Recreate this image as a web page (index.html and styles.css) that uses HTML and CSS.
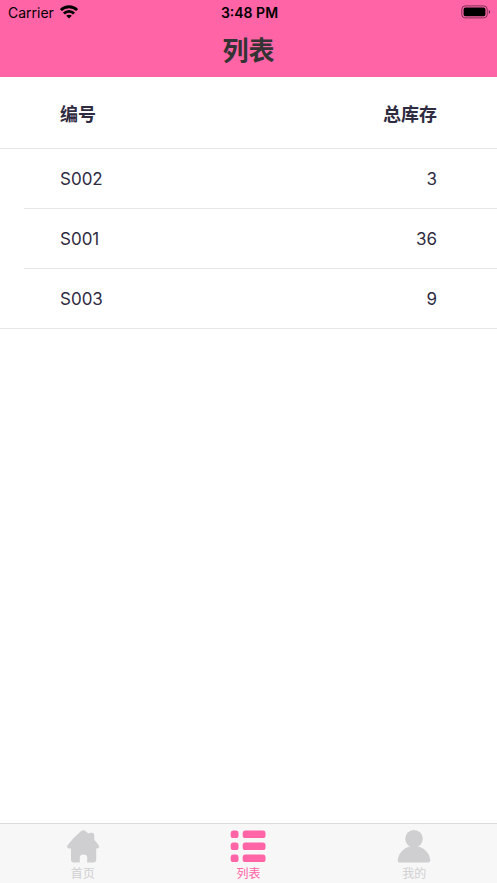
FILE: index.html
```html
<!DOCTYPE html>
<html lang="zh-CN">
<head>
<meta charset="utf-8">
<meta name="viewport" content="width=device-width, initial-scale=1">
<title>列表</title>
<link rel="stylesheet" href="styles.css">
</head>
<body>
<header class="header">
  <div class="status">
    <div class="carrier">
      <span>Carrier</span>
      <svg width="18" height="14" viewBox="0 0 18 14" aria-hidden="true">
        <g fill="none" stroke="#000" stroke-width="2.8">
          <path d="M.9 5.1C5.4.6 12.6.6 17.1 5.1"/>
          <path d="M3.9 8.400c2.8-2.800 7.400-2.800 10.200 0"/>
        </g>
        <path d="M9 13.600 6.200 10.800c1.600-1.500 4-1.500 5.600 0Z"/>
      </svg>
    </div>
    <time class="clock">3:48 PM</time>
    <div class="battery">
      <svg width="30" height="14" viewBox="0 0 30 14" aria-hidden="true">
        <rect x=".8" y=".9" width="25.4" height="12" rx="3.4" fill="none" stroke="#000" stroke-opacity=".5"/>
        <rect x="2.6" y="2.6" width="21.8" height="8.6" rx="1.8"/>
        <path d="M27.8 4.8c1.8.8 1.8 3.4 0 4.2Z" fill-opacity=".6"/>
      </svg>
    </div>
  </div>
  <h1 class="title">列表</h1>
</header>
<main class="content">
  <table class="stock">
    <thead>
      <tr><th scope="col">编号</th><th scope="col">总库存</th></tr>
    </thead>
    <tbody>
      <tr><td>S002</td><td>3</td></tr>
      <tr><td>S001</td><td>36</td></tr>
      <tr><td>S003</td><td>9</td></tr>
    </tbody>
  </table>
</main>
<nav class="tabs">
  <a class="tab" href="#home">
    <svg width="36" height="36" viewBox="0 0 36 36" aria-hidden="true">
      <path fill="currentColor" d="M15.600 3.500q2.700-2.400 5.400 0l2.400 1.900q.8-.7 2-.7h1.300q2.600 0 2.600 2.600v4.400l3.800 4.700q1.200 1.500 1 2.700-.4 1.500-2.200 1.500H31.200v10.900q0 3-3 3h-6v-5q0-3-3.700-3t-3.700 3v5H9q-3 0-3-3V20.600H4.300q-1.800 0-2.200-1.500-.2-1.200 1-2.700Q8.500 9.600 15.600 3.500Z"/>
    </svg>
    <span>首页</span>
  </a>
  <a class="tab tab-active" href="#list" aria-current="page">
    <svg width="36" height="36" viewBox="0 0 36 36" aria-hidden="true">
      <g fill="currentColor">
        <rect x=".7" y="2.500" width="7.800" height="7.500" rx="2.600"/>
        <rect x="12.700" y="2.500" width="22.800" height="7.500" rx="2.600"/>
        <rect x=".7" y="14.600" width="7.800" height="7.500" rx="2.600"/>
        <rect x="12.700" y="14.600" width="22.800" height="7.500" rx="2.600"/>
        <rect x=".7" y="26.600" width="7.800" height="7.500" rx="2.600"/>
        <rect x="12.700" y="26.600" width="22.800" height="7.500" rx="2.600"/>
      </g>
    </svg>
    <span>列表</span>
  </a>
  <a class="tab" href="#mine">
    <svg width="36" height="36" viewBox="0 0 36 36" aria-hidden="true">
      <g fill="currentColor">
        <circle cx="18" cy="10.700" r="8.800"/>
        <path d="M12.500 18.800h11c5.500 2.200 10.100 6.800 10.700 13.400q.2 2.300-2.200 2.300H4q-2.400 0-2.200-2.300C2.400 25.600 7 21 12.500 18.800Z"/>
      </g>
    </svg>
    <span>我的</span>
  </a>
</nav>
</body>
</html>
```
FILE: styles.css
```css
* {
  box-sizing: border-box;
}

body {
  margin: 0;
  min-height: 100vh;
  display: flex;
  flex-direction: column;
  background: #fff;
  color: #2f2c42;
  font-family: Inter, "Noto Sans CJK SC", sans-serif;
}

.header {
  background: #ff64a7;
}

.status {
  display: grid;
  grid-template-columns: 1fr auto 1fr;
  align-items: center;
  height: 24px;
  padding: 0 6px 0 8px;
  color: #000;
  font-size: 14px;
}

.carrier {
  display: flex;
  align-items: center;
  gap: 6px;
}

.carrier svg,
.battery svg {
  display: block;
}

.clock {
  font-weight: 600;
}

.battery {
  justify-self: end;
}

.title {
  margin: 0;
  color: #333;
  font-size: 26px;
  font-weight: 700;
  line-height: 53px;
  text-align: center;
}

.content {
  flex: 1;
}

.stock {
  width: 100%;
  border-collapse: separate;
  border-spacing: 0;
  font-size: 17px;
}

.stock th,
.stock td {
  height: 60px;
  padding: 0 60px;
  border-bottom: 1px solid #e8e8ea;
  text-align: left;
}

.stock th {
  height: 72px;
  font-size: 18px;
  font-weight: 700;
}

.stock th:last-child,
.stock td:last-child {
  text-align: right;
}

.stock tbody tr:not(:last-child) td:first-child {
  border-bottom: 0;
  background: linear-gradient(#e8e8ea, #e8e8ea) 24px 100% / 100% 1px no-repeat;
}

.tabs {
  display: grid;
  grid-template-columns: repeat(3, 1fr);
  border-top: 1px solid #dcdcdc;
  background: #f7f7f7;
}

.tab {
  display: flex;
  flex-direction: column;
  align-items: center;
  padding-top: 4px;
  color: #cfcfd1;
  font-size: 12px;
  line-height: 19px;
  text-decoration: none;
}

.tab-active {
  color: #ff64a7;
}
```
